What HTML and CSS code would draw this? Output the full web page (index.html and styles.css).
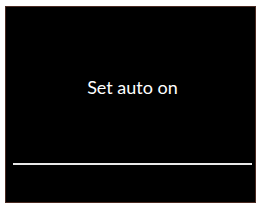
FILE: index.html
```html
<!DOCTYPE html>
<html lang="en">
<head>
    <meta charset="UTF-8">
    <title>Set auto on</title>
    <link rel="stylesheet" href="styles.css">
</head>
<body>
    <div class="screen">
        <div class="msg">Set auto on</div>
        <div class="rule"></div>
    </div>
</body>
</html>
```

FILE: styles.css
```css
* {
    box-sizing: border-box;
}

body {
    margin: 0;
    padding: 6px 1px 0 5px;
    background-color: #fff;
}

.screen {
    height: 197px;
    width: 251px;
    background-color: #000;
    border: 1px solid #4a2a22;
    display: flex;
    flex-direction: column;
    padding: 0 3px 0 7px;
}

.msg {
    color: #fff;
    font-family: "Lato", "Liberation Sans", sans-serif;
    font-size: 18px;
    text-align: center;
    margin-top: 68px;
    height: 24px;
    line-height: 24px;
}

.rule {
    height: 2px;
    background-color: #e8e8e8;
    margin-top: 64px;
}
```
